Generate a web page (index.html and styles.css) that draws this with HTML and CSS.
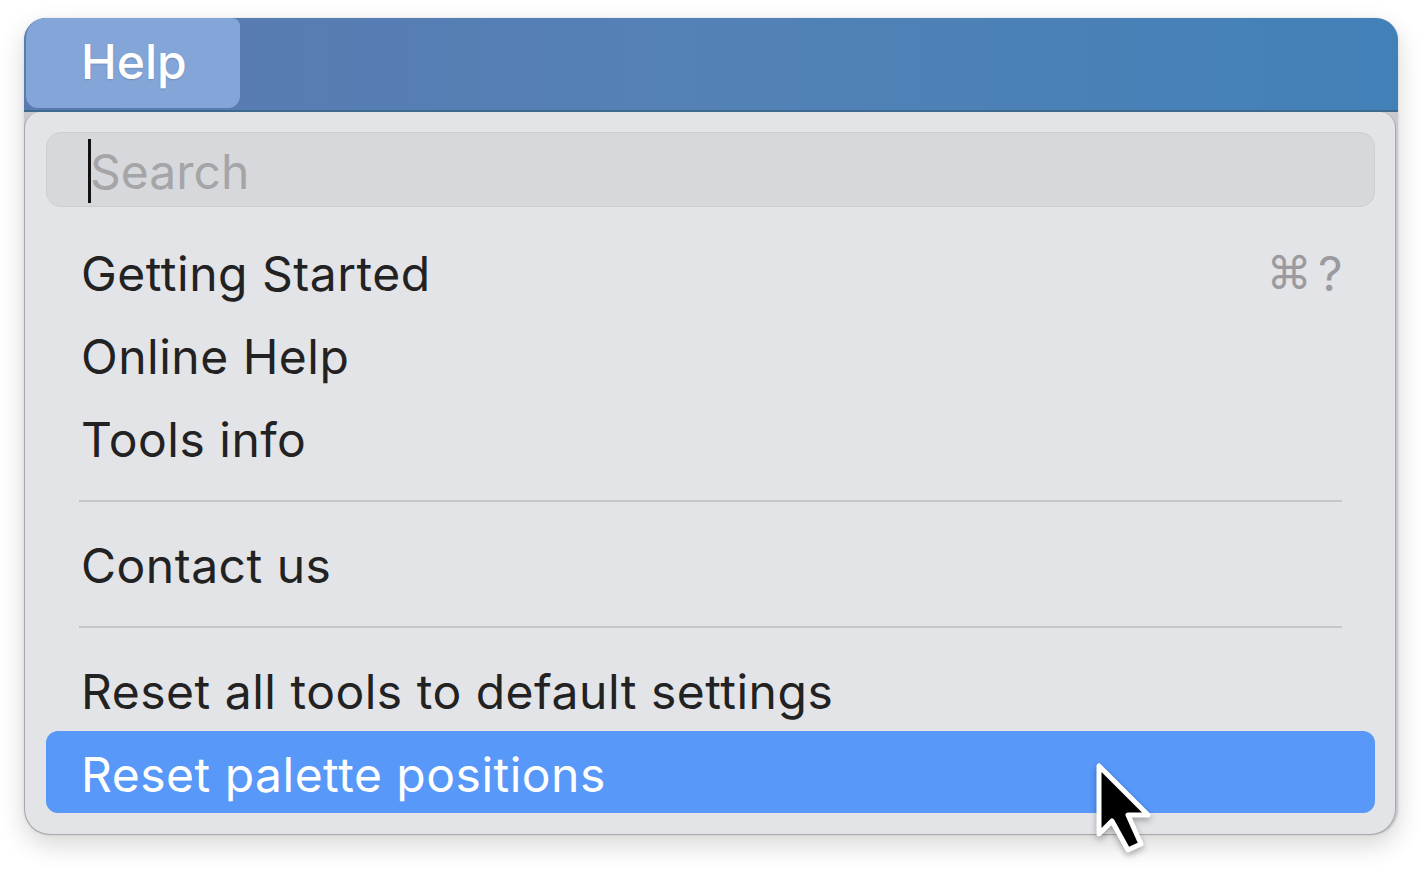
FILE: index.html
```html
<!DOCTYPE html>
<html lang="en">
<head>
<meta charset="utf-8">
<title>Help menu</title>
<link rel="stylesheet" href="styles.css">
</head>
<body>
<div class="window">
  <div class="menubar">
    <div class="help-btn">Help</div>
  </div>
  <div class="panel">
    <div class="search">
      <span class="caret"></span>
      <span class="placeholder">Search</span>
    </div>
    <ul class="items">
      <li class="item"><span class="label">Getting Started</span><span class="shortcut"><span class="cmd">⌘</span>?</span></li>
      <li class="item"><span class="label">Online Help</span></li>
      <li class="item"><span class="label">Tools info</span></li>
      <li class="sep"></li>
      <li class="item"><span class="label">Contact us</span></li>
      <li class="sep"></li>
      <li class="item"><span class="label">Reset all tools to default settings</span></li>
      <li class="item active"><span class="label">Reset palette positions</span></li>
    </ul>
  </div>
  <svg class="pointer" width="60" height="96" viewBox="0 0 60 96" aria-hidden="true">
    <path d="M5 4 L5 72 L18 59 L34 88 L47 82 L34 53 L54 53 Z" fill="#000" stroke="#fff" stroke-width="5" stroke-linejoin="round"/>
  </svg>
</div>
</body>
</html>
```
FILE: styles.css
```css
html, body {
  margin: 0;
  padding: 0;
  background: #ffffff;
}

body {
  font-family: Inter, "Liberation Sans", "DejaVu Sans", sans-serif;
  width: 1425px;
  height: 873px;
  overflow: hidden;
}

.window {
  position: relative;
  margin: 18px 0 0 24px;
  width: 1374px;
  border-radius: 22px 22px 26px 26px;
  box-shadow: 0 10px 26px rgba(0, 0, 0, 0.16), 0 0 3px rgba(0, 0, 0, 0.10);
  background: #c9cacd;
}

.menubar {
  height: 92px;
  border-radius: 22px 22px 0 0;
  background: linear-gradient(90deg, #5a7ab1 0%, #5381b6 50%, #4281b8 100%);
  border-bottom: 2px solid #3d6a8d;
  display: flex;
  align-items: flex-start;
}

.help-btn {
  margin-left: 2px;
  width: 214px;
  height: 90px;
  box-sizing: border-box;
  padding: 5px 0 0 55px;
  line-height: 77px;
  background: #84a5d7;
  border-radius: 20px 8px 12px 12px;
  color: #ffffff;
  font-size: 48px;
  font-weight: 500;
  text-shadow: 0 1px 2px rgba(0, 0, 0, 0.15);
}

.panel {
  box-sizing: border-box;
  height: 723px;
  margin-right: 2px;
  background: #e3e4e8;
  border: 1.5px solid #a7a7a9;
  border-top: 0;
  border-radius: 16px 16px 26px 26px;
  padding: 20px 20px 0 21px;
}

.search {
  box-sizing: border-box;
  height: 75px;
  border: 1px solid #cdced2;
  background: #d7d8dc;
  border-radius: 15px;
  display: flex;
  align-items: center;
  padding-left: 41px;
}

.caret {
  width: 3px;
  height: 64px;
  background: #111111;
  margin-top: 2px;
}

.placeholder {
  color: #a5a5a8;
  font-size: 48px;
  margin-left: -1px;
  margin-top: 3px;
}

.items {
  list-style: none;
  margin: 23px 0 0 0;
  padding: 0;
}

.item {
  height: 83px;
  box-sizing: border-box;
  padding: 5px 35px 0 35px;
  line-height: 77px;
  font-size: 48px;
  letter-spacing: 0.5px;
  color: #222222;
  display: flex;
  justify-content: space-between;
  border-radius: 12px;
}

.item.active {
  background: #5898f8;
  color: #ffffff;
  height: 82px;
}

.shortcut {
  color: #9b9b9f;
  display: flex;
  gap: 6px;
  margin-right: -3px;
}

.cmd {
  font-family: "DejaVu Sans", sans-serif;
  font-size: 45px;
}

.sep {
  height: 43px;
  display: flex;
  align-items: center;
  padding: 0 33px 0 33px;
}

.sep::before {
  content: "";
  flex: 1;
  height: 2px;
  background: #c6c6ca;
}

.pointer {
  position: absolute;
  left: 1070px;
  top: 744px;
  filter: drop-shadow(0 3px 3px rgba(0, 0, 0, 0.3));
}
```
